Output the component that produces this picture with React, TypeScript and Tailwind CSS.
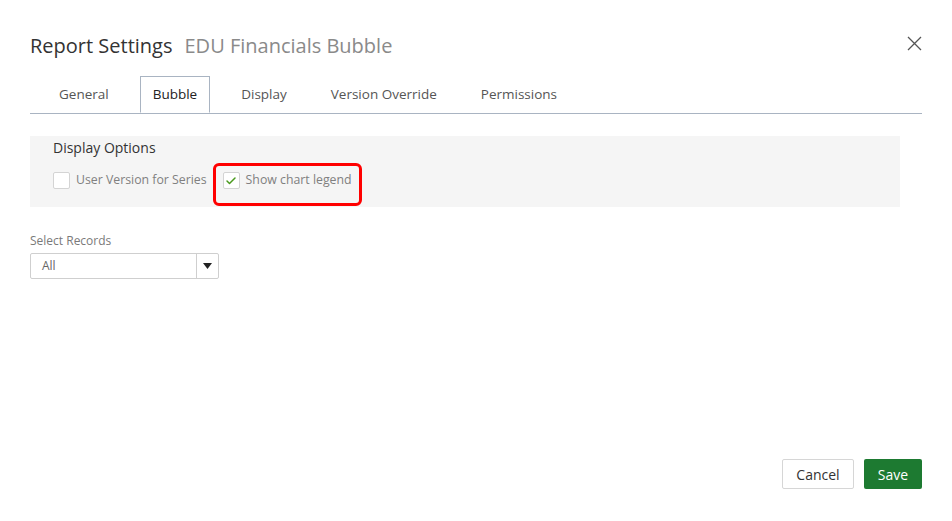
import { Check } from "lucide-react";

const tabs = ["General", "Bubble", "Display", "Version Override", "Permissions"];

export default function App() {
  return (
    <div className="w-[952px] h-[521px] bg-white relative font-['Open_Sans',sans-serif] text-[#333]">
      {/* Close */}
      <button className="absolute right-[30px] top-[36px] w-[15px] h-[15px] text-[#555]">
        <svg viewBox="0 0 15 15" width="15" height="15">
          <path d="M1 1L14 14M14 1L1 14" stroke="currentColor" strokeWidth="1.3" fill="none" />
        </svg>
      </button>

      <div className="pl-[30px] pr-[30px] pt-[32px] flex flex-col">
        <div className="flex items-baseline gap-[12px] h-[28px]">
          <h1 className="text-[20px] text-[#333] leading-[28px]">Report Settings</h1>
          <span className="text-[20px] text-[#8a8a8a] leading-[28px]">EDU Financials Bubble</span>
        </div>

        {/* Tabs */}
        <div className="mt-[16px] flex border-b border-[#a9b4c2] pl-[16px] gap-[18px]">
          {tabs.map((t) => {
            const active = t === "Bubble";
            return (
              <div
                key={t}
                className={
                  active
                    ? "px-[12px] h-[37px] flex items-center text-[13.5px] text-[#222] border border-[#a9b4c2] border-b-white bg-white -mb-px"
                    : "px-[12px] h-[37px] flex items-center text-[13.5px] text-[#555] border border-transparent"
                }
              >
                {t}
              </div>
            );
          })}
        </div>

        {/* Display Options */}
        <div className="mt-[22px] w-[870px] h-[71px] bg-[#f5f5f5] pl-[23px] pt-[2px]">
          <div className="text-[14px] text-[#333] leading-[20px] font-medium">Display Options</div>
          <div className="flex items-start mt-[5px]">
            <label className="flex items-center gap-[6px] h-[17px] mt-[9px]">
              <span className="w-[17px] h-[17px] bg-white border border-[#d4d4d4] rounded-[2px]" />
              <span className="text-[12.3px] text-[#808080]">User Version for Series</span>
            </label>
            <div className="ml-[6px] w-[149px] h-[43px] border-[3px] border-[#ff0000] rounded-[6px] flex items-start pl-[7px] pt-[6px]">
              <label className="flex items-center gap-[6px] h-[17px]">
                <span className="w-[17px] h-[17px] bg-white border border-[#d4d4d4] rounded-[2px] flex items-center justify-center">
                  <Check size={12} strokeWidth={3} className="text-[#4a9a1e]" />
                </span>
                <span className="text-[12.3px] text-[#808080]">Show chart legend</span>
              </label>
            </div>
          </div>
        </div>

        {/* Select Records */}
        <div className="mt-[26px] text-[12px] text-[#7a7a7a] leading-[16px]">Select Records</div>
        <div className="mt-[4px] w-[189px] h-[26px] border border-[#cfcfcf] rounded-[2px] flex">
          <div className="flex-1 flex items-center pl-[11px] text-[12px] text-[#666]">All</div>
          <div className="w-[22px] border-l border-[#cfcfcf] flex items-center justify-center">
            <svg width="9" height="6" viewBox="0 0 9 6">
              <path d="M0 0H9L4.5 6Z" fill="#222" />
            </svg>
          </div>
        </div>
      </div>

      {/* Footer */}
      <div className="absolute right-[30px] top-[459px] flex gap-[10px]">
        <button className="w-[72px] h-[30px] border border-[#d6d6d6] rounded-[2px] bg-white text-[14px] text-[#333]">
          Cancel
        </button>
        <button className="w-[58px] h-[30px] rounded-[2px] bg-[#1d7a31] text-[14px] text-white">Save</button>
      </div>
    </div>
  );
}
